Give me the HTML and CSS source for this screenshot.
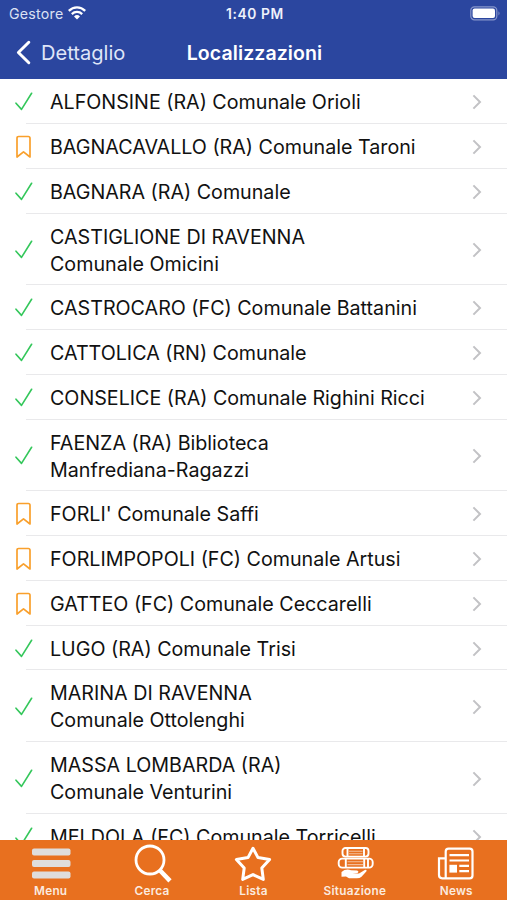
FILE: index.html
```html
<!DOCTYPE html>
<html lang="it">
<head>
<meta charset="utf-8">
<title>Localizzazioni</title>
<link rel="stylesheet" href="styles.css">
</head>
<body>
<svg width="0" height="0" class="defs">
  <symbol id="check" viewBox="0 0 18 20"><path d="M1 11.2 6.5 17.4 16.6 1.3" fill="none" stroke="#34c75b" stroke-width="1.6" stroke-linecap="round" stroke-linejoin="round"/></symbol>
  <symbol id="mark" viewBox="0 0 18 24"><path d="M2 3.2Q2 1.5 3.7 1.5H13.3Q15 1.5 15 3.2V22L8.5 16.8 2 22Z" fill="none" stroke="#f9a02c" stroke-width="1.7" stroke-linejoin="round"/></symbol>
  <symbol id="chev" viewBox="0 0 10 16"><path d="M1.4 1.4 8 8 1.4 14.6" fill="none" stroke="#c2c2c5" stroke-width="2"/></symbol>
</svg>
<div class="app">
  <header>
    <div class="status">
      <div class="carrier"><span>Gestore</span>
        <svg width="18" height="14" viewBox="0 0 18 14"><g fill="none" stroke="#fff" stroke-width="2.3"><path d="M.8 4.9C5.5.2 12.5.2 17.2 4.9"/><path d="M3.8 8.1C6.8 5.2 11.2 5.2 14.2 8.1"/></g><path d="M6 10.4Q9 7.8 12 10.4L9 13.5Z" fill="#fff"/></svg>
      </div>
      <div class="time">1:40 PM</div>
      <svg class="battery" width="31" height="15" viewBox="0 0 31 15"><rect x=".8" y=".8" width="26" height="13" rx="3.6" fill="none" stroke="#8796cb" stroke-width="1.2"/><rect x="2.6" y="2.6" width="22.4" height="9.4" rx="2" fill="#fff"/><path d="M28.5 5.2Q30.5 7.3 28.5 9.4Z" fill="#8796cb"/></svg>
    </div>
    <nav class="bar">
      <div class="back"><svg width="16" height="25" viewBox="0 0 16 25"><path d="M13.8 2.3 3.4 12.5 13.8 22.7" fill="none" stroke="#fff" stroke-width="3" stroke-linecap="round" stroke-linejoin="round"/></svg><span>Dettaglio</span></div>
      <h1>Localizzazioni</h1>
    </nav>
  </header>
  <main>
    <div class="row"><svg class="ic"><use href="#check"/></svg><p><span>ALFONSINE (RA) Comunale Orioli</span></p><svg class="ch"><use href="#chev"/></svg></div>
    <div class="row"><svg class="ic bm"><use href="#mark"/></svg><p><span>BAGNACAVALLO (RA) Comunale Taroni</span></p><svg class="ch"><use href="#chev"/></svg></div>
    <div class="row"><svg class="ic"><use href="#check"/></svg><p><span>BAGNARA (RA) Comunale</span></p><svg class="ch"><use href="#chev"/></svg></div>
    <div class="row two"><svg class="ic"><use href="#check"/></svg><p><span>CASTIGLIONE DI RAVENNA</span><span>Comunale Omicini</span></p><svg class="ch"><use href="#chev"/></svg></div>
    <div class="row"><svg class="ic"><use href="#check"/></svg><p><span>CASTROCARO (FC) Comunale Battanini</span></p><svg class="ch"><use href="#chev"/></svg></div>
    <div class="row"><svg class="ic"><use href="#check"/></svg><p><span>CATTOLICA (RN) Comunale</span></p><svg class="ch"><use href="#chev"/></svg></div>
    <div class="row"><svg class="ic"><use href="#check"/></svg><p><span>CONSELICE (RA) Comunale Righini Ricci</span></p><svg class="ch"><use href="#chev"/></svg></div>
    <div class="row two"><svg class="ic"><use href="#check"/></svg><p><span>FAENZA (RA) Biblioteca</span><span>Manfrediana-Ragazzi</span></p><svg class="ch"><use href="#chev"/></svg></div>
    <div class="row"><svg class="ic bm"><use href="#mark"/></svg><p><span>FORLI' Comunale Saffi</span></p><svg class="ch"><use href="#chev"/></svg></div>
    <div class="row"><svg class="ic bm"><use href="#mark"/></svg><p><span>FORLIMPOPOLI (FC) Comunale Artusi</span></p><svg class="ch"><use href="#chev"/></svg></div>
    <div class="row"><svg class="ic bm"><use href="#mark"/></svg><p><span>GATTEO (FC) Comunale Ceccarelli</span></p><svg class="ch"><use href="#chev"/></svg></div>
    <div class="row"><svg class="ic"><use href="#check"/></svg><p><span>LUGO (RA) Comunale Trisi</span></p><svg class="ch"><use href="#chev"/></svg></div>
    <div class="row two"><svg class="ic"><use href="#check"/></svg><p><span>MARINA DI RAVENNA</span><span>Comunale Ottolenghi</span></p><svg class="ch"><use href="#chev"/></svg></div>
    <div class="row two"><svg class="ic"><use href="#check"/></svg><p><span>MASSA LOMBARDA (RA)</span><span>Comunale Venturini</span></p><svg class="ch"><use href="#chev"/></svg></div>
    <div class="row"><svg class="ic"><use href="#check"/></svg><p><span>MELDOLA (FC) Comunale Torricelli</span></p><svg class="ch"><use href="#chev"/></svg></div>
  </main>
  <footer>
    <div class="tab"><svg viewBox="0 0 40 40"><g fill="#dfdddc"><rect x="1" y="4.5" width="38.5" height="7" rx="2"/><rect x="1" y="16" width="38.5" height="7" rx="2"/><rect x="1" y="27.5" width="38.5" height="7" rx="2"/></g></svg><span>Menu</span></div>
    <div class="tab"><svg viewBox="0 0 40 40"><g fill="none" stroke="#fff"><circle cx="18" cy="16" r="14" stroke-width="2.8"/><path d="M27.8 26.2 38 36.9" stroke-width="4.5"/></g></svg><span>Cerca</span></div>
    <div class="tab"><svg viewBox="0 0 40 40"><path d="M20 4.2 25 13.6 36.6 15.5 28.8 24 30.3 35.4 20 30.6 9.7 35.4 11.2 24 3.4 15.5 15 13.6Z" fill="none" stroke="#fff" stroke-width="3" stroke-linejoin="round"/></svg><span>Lista</span></div>
    <div class="tab"><svg viewBox="0 0 40 40"><g fill="none" stroke="#fff" stroke-width="1.9"><rect x="7.5" y="4" width="26" height="8.6" rx="3"/><path d="M12.5 4v8.6M29 4v8.6"/><rect x="3.7" y="14.6" width="34" height="9" rx="3.5"/><path d="M10.8 14.6v9M29.2 14.6v9M33 14.6v9"/></g><path d="M14 7.2h13.5M14 9.8h13.5M12.5 17.8h15.5M12.5 20.6h15.5" stroke="#fff" stroke-opacity=".55" stroke-width="1.1"/><path d="M6.5 28Q11 24.3 16 26.3L22 26.4Q24.5 27.2 22.5 28.9L17.5 29.6 24 29.6 29.8 25.9Q32 25.2 31.5 27.2L26.5 32.7Q24.5 34.5 21 34.2H14L11 32.4 6.5 32.7Z" fill="#fff"/></svg><span>Situazione</span></div>
    <div class="tab"><svg viewBox="0 0 40 40"><g fill="none" stroke="#fff" stroke-width="2.2"><path d="M9.7 34.3V7.5Q9.7 4.6 12.6 4.6H33.6Q36.5 4.6 36.5 7.5V31.4Q36.5 34.3 33.6 34.3H6.2Q3 34.3 3 31.1V14.3H9.7"/><path d="M13.5 11.2h19.5M13.5 16.5h19.5M23.3 21.8H33M23.3 27.2H33"/></g><rect x="13.4" y="20.8" width="7.6" height="7.8" fill="#fff"/></svg><span>News</span></div>
  </footer>
</div>
</body>
</html>
```
FILE: styles.css
```css
* { box-sizing: border-box; }
body { margin: 0; background: #fff; font-family: Inter, sans-serif; }
.defs { display: none; }
.app { width: 507px; height: 900px; display: flex; flex-direction: column; overflow: hidden; }
header { height: 79px; flex: none; background: #2b469f; color: #fff; }
.status { height: 27px; display: grid; grid-template-columns: 1fr auto 1fr; align-items: center; padding: 0 6px 0 9px; }
.carrier { display: flex; align-items: center; gap: 5px; font-size: 14.2px; color: #dce1f3; letter-spacing: .25px; }
.carrier svg { margin-top: -1px; }
.time { font-size: 13.8px; font-weight: 600; letter-spacing: .6px; color: #eef1fb; }
.battery { justify-self: end; }
.bar { height: 52px; display: grid; grid-template-columns: 1fr auto 1fr; align-items: center; padding: 0 13px 1px 15px; }
.back { display: flex; align-items: center; gap: 10px; font-size: 20.1px; color: #dfe5f8; }
h1 { margin: 0; font-size: 19.5px; font-weight: 600; letter-spacing: .1px; }
main { flex: 1; min-height: 0; overflow: hidden; padding-top: .4px; }
.row { height: 44.75px; display: flex; align-items: center; padding: 1px 25px 0 15px; background: linear-gradient(#e9e9eb, #e9e9eb) 26px 100% / 100% 1px no-repeat; }
.row.two { height: 71.75px; }
.ic { width: 18px; height: 20px; flex: none; }
.ic.bm { height: 24px; }
.row p { flex: 1; margin: 1px 0 0 17px; font-size: 19.68px; line-height: 27px; color: #111; white-space: nowrap; }
.row p span { display: block; }
.ch { width: 10px; height: 16px; flex: none; }
footer { height: 60px; flex: none; background: #e8701f; display: grid; grid-template-columns: repeat(5, 1fr); }
.tab { display: flex; flex-direction: column; align-items: center; padding-top: 4px; color: #fbeadf; font-size: 11.8px; font-weight: 600; letter-spacing: .25px; line-height: 15px; }
.tab svg { width: 40px; height: 40px; }
```
